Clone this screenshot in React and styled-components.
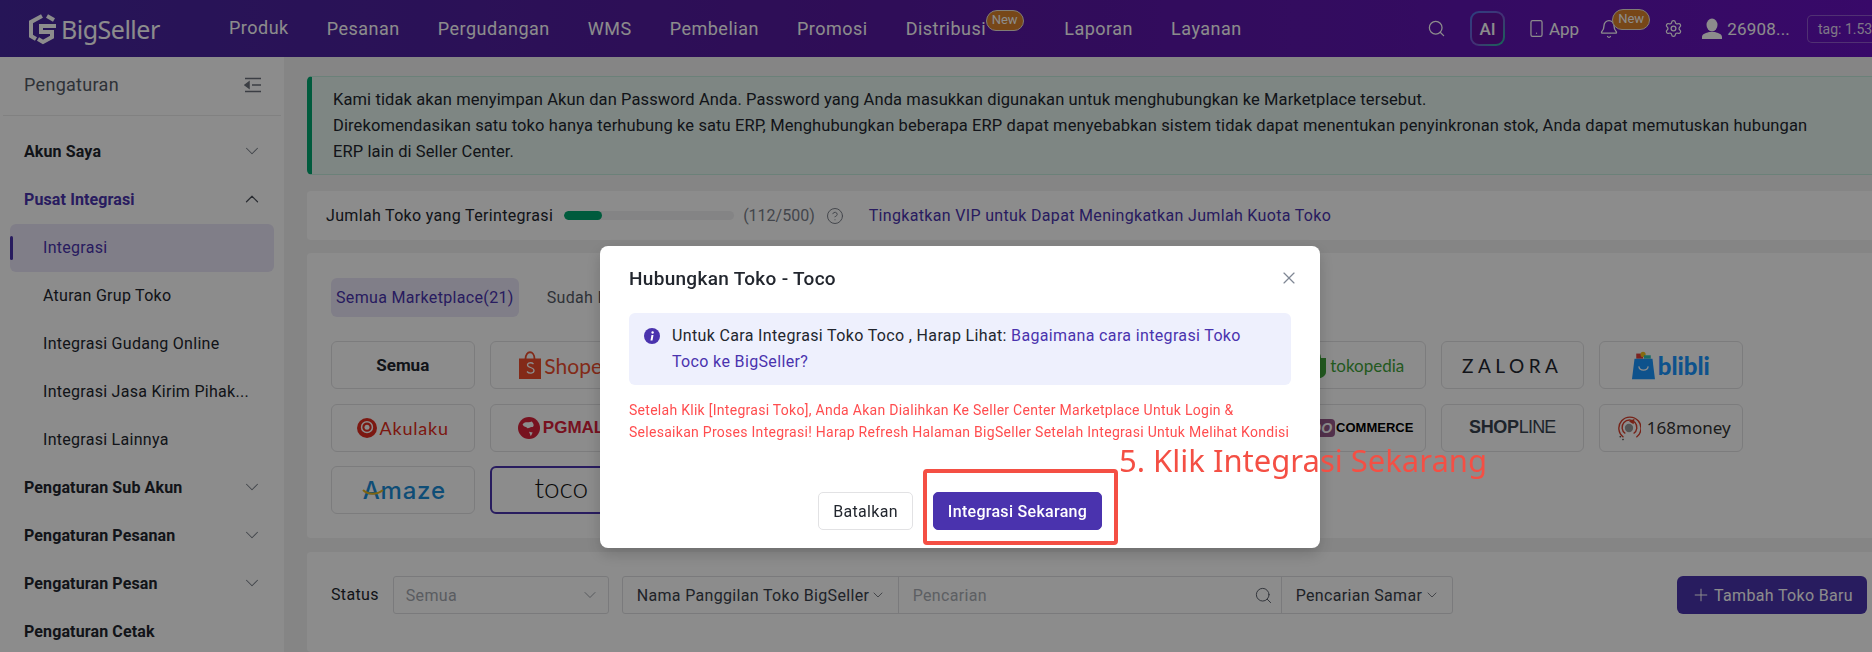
import styled, { createGlobalStyle } from 'styled-components';
import { Search, Smartphone, Bell, Settings, ChevronDown, ChevronUp, X, Plus, CircleHelp } from 'lucide-react';

const GlobalStyle = createGlobalStyle`
    html, body {
        margin: 0;
        height: 652px;
        overflow: hidden;
        background: #f3f3f3;
        font-family: Roboto, "Liberation Sans", sans-serif;
        color: #22262e;
    }
    * { box-sizing: border-box; }
`

const Page = styled.div`
    width: 1872px;
    height: 652px;
    overflow: hidden;
    display: flex;
    flex-direction: column;
`

const Header = styled.header`
    height: 57px;
    flex-shrink: 0;
    display: flex;
    align-items: center;
    padding-left: 28px;
    color: #fff;
    background: linear-gradient(90deg, #46279f 0%, #56199f 45%, #6612bf 100%);
`

const Logo = styled.div`
    display: flex;
    align-items: center;
    width: 201px;
    font-size: 25px;
    font-family: "Noto Sans", sans-serif;
    letter-spacing: -0.5px;
`

const Nav = styled.nav`
    display: flex;
    align-items: center;
    gap: 38px;
`

const NavItem = styled.a`
    position: relative;
    font-size: 18px;
    letter-spacing: 0.5px;
    white-space: nowrap;
    margin-top: ${p => (p.$raised ? '-3px' : '0')};
    margin-right: ${p => (p.$badge ? '40px' : '0')};
`

const NewBadge = styled.span`
    position: absolute;
    left: ${p => p.$left}px;
    top: ${p => p.$top}px;
    width: 38px;
    height: 21px;
    border-radius: 11px 11px 10px 10px;
    border: 1px solid #e9e2d6;
    background: #d9812c;
    color: #fff;
    font-size: 13px;
    letter-spacing: 0;
    line-height: 18px;
    text-align: center;
`

const HeaderRight = styled.div`
    margin-left: auto;
    display: flex;
    align-items: center;
    font-size: 17px;
`

const AiBox = styled.div`
    width: 35px;
    height: 35px;
    margin: 0 22px 0 24px;
    border-radius: 9px;
    padding: 2px;
    background: linear-gradient(135deg, #4f78e8, #7a5bd6 55%, #20c79a);
`

const AiInner = styled.div`
    width: 100%;
    height: 100%;
    border-radius: 7px;
    background: #62129f;
    display: flex;
    align-items: center;
    justify-content: center;
    font-size: 17px;
    font-weight: 500;
`

const AppLink = styled.div`
    display: flex;
    align-items: center;
    gap: 3px;
    margin-right: 20px;
`

const BellWrap = styled.div`
    position: relative;
    display: flex;
    margin-right: 45px;
`

const UserLink = styled.div`
    display: flex;
    align-items: center;
    gap: 5px;
    margin: 0 17px 0 19px;
    letter-spacing: 0.2px;
`

const TagBox = styled.div`
    width: 65px;
    height: 28px;
    overflow: hidden;
    white-space: nowrap;
    border: 1px solid rgba(255, 255, 255, 0.3);
    border-right: none;
    border-radius: 5px 0 0 5px;
    padding-left: 10px;
    font-size: 14px;
    line-height: 26px;
    color: rgba(255, 255, 255, 0.85);
`

const Body = styled.div`
    flex: 1;
    display: flex;
    min-height: 0;
`

const Sidebar = styled.aside`
    width: 284px;
    flex-shrink: 0;
    background: #fff;
`

const SidebarTitle = styled.div`
    height: 59px;
    margin: 0 3px 12px;
    padding: 0 19px 3px 21px;
    display: flex;
    align-items: center;
    justify-content: space-between;
    border-bottom: 1px solid #ececec;
    font-size: 18px;
    letter-spacing: 0.3px;
    color: #555b66;
`

const MenuRow = styled.div`
    position: relative;
    height: 48px;
    display: flex;
    align-items: center;
    justify-content: space-between;
    margin: 0 10px;
    padding: 0 11px 2px ${p => (p.$child ? '33px' : '14px')};
    border-radius: 6px;
    font-size: 16px;
    font-weight: ${p => (p.$child ? 400 : 700)};
    letter-spacing: ${p => (p.$child ? 0.28 : 0.12)}px;
    color: ${p => (p.$accent ? '#4a33ae' : '#22262e')};
    background: ${p => (p.$active ? '#e9e6f8' : 'transparent')};
    white-space: nowrap;

    &::before {
        content: '';
        display: ${p => (p.$active ? 'block' : 'none')};
        position: absolute;
        left: 0;
        top: 12px;
        width: 3px;
        height: 24px;
        border-radius: 2px;
        background: #4a33ae;
    }
`

const Main = styled.main`
    flex: 1;
    min-width: 0;
    padding: 19px 0 0 23px;
    display: flex;
    flex-direction: column;
    letter-spacing: 0.33px;
`

const Alert = styled.div`
    height: 99px;
    margin-bottom: 16px;
    padding: 10px 50px 0 21px;
    border: 1px solid #c3ebdc;
    border-left: 5px solid #00a76f;
    border-right: none;
    border-radius: 5px 0 0 5px;
    background: #e5f5ef;
    font-size: 16.5px;
    letter-spacing: 0.1px;
    line-height: 26px;
    color: #22262e;
`

const Panel = styled.section`
    background: #fff;
    border-radius: 4px 0 0 4px;
    margin-bottom: ${p => p.$gap || 0}px;
`

const QuotaPanel = styled(Panel)`
    height: 49px;
    display: flex;
    align-items: center;
    padding-left: 19px;
    font-size: 16px;
    white-space: nowrap;
`

const Track = styled.div`
    width: 170px;
    height: 9px;
    margin: 0 9px 0 11px;
    border-radius: 5px;
    background: #f0f0f2;
    overflow: hidden;
`

const Fill = styled.div`
    height: 100%;
    border-radius: 5px;
    background: #00a76f;
`

const Muted = styled.span`
    color: #7a808a;
    display: inline-flex;
    align-items: center;
    letter-spacing: 0;
`

const LinkText = styled.a`
    color: #4a33ae;
`

const MarketPanel = styled(Panel)`
    height: 285px;
    padding: 25px 0 0 24px;
`

const Tabs = styled.div`
    display: flex;
    align-items: center;
    gap: 23px;
    margin-bottom: 24px;
`

const Tab = styled.div`
    height: 39px;
    padding: 0 5px;
    border-radius: 6px;
    display: flex;
    align-items: center;
    font-size: 16px;
    color: ${p => (p.$active ? '#4a33ae' : '#555b66')};
    background: ${p => (p.$active ? '#e9e6f8' : 'transparent')};
`

const CardGrid = styled.div`
    display: grid;
    grid-template-columns: repeat(9, 143.5px);
    grid-auto-rows: 48px;
    column-gap: 15px;
    row-gap: 14.5px;
`

const Card = styled.div`
    display: flex;
    align-items: center;
    justify-content: center;
    border-radius: 6px;
    border: ${p => (p.$selected ? '2px solid #4a33ae' : '1px solid #e2e2e4')};
    white-space: nowrap;
`

const LogoRow = styled.span`
    display: inline-flex;
    align-items: center;
    gap: ${p => p.$gap ?? 3}px;
    margin-left: ${p => p.$shift || 0}px;
`

const Wordmark = styled.span`
    font-family: ${p => p.$font || 'Lato, sans-serif'};
    font-size: ${p => p.$size || 20}px;
    font-weight: ${p => p.$weight || 400};
    color: ${p => p.$color || '#22262e'};
    letter-spacing: ${p => p.$spacing || 0}px;
    margin-bottom: ${p => p.$lift || 0}px;
`

const WooBubble = styled.span`
    margin-right: -1px;
    padding: 1px 3px;
    border-radius: 4px;
    background: #96588a;
    color: #fff;
    font: italic 700 14px "Liberation Sans", sans-serif;
    letter-spacing: 0;
`

const AmazeMark = styled.span`
    position: relative;
    display: inline-flex;
    margin-left: 3px;
`

const Swoosh = styled.svg`
    position: absolute;
    left: -1px;
    top: 13px;
`

const FilterPanel = styled(Panel)`
    flex: 1;
    display: flex;
    align-items: flex-start;
    padding: 24px 5px 0 24px;
    font-size: 16px;
`

const FilterLabel = styled.span`
    line-height: 38px;
    margin-right: 14px;
`

const SelectBox = styled.div`
    width: 216px;
    height: 38px;
    margin-right: 13px;
    padding: 0 8px 0 12px;
    display: flex;
    align-items: center;
    justify-content: space-between;
    border: 1px solid #dedfe2;
    border-radius: 3px;
    color: #a4a8b0;
`

const InputGroup = styled.div`
    display: flex;
    height: 38px;
    border: 1px solid #dedfe2;
    border-radius: 3px;
`

const GroupCell = styled.div`
    width: ${p => p.$width}px;
    display: flex;
    align-items: center;
    justify-content: space-between;
    padding: 0 ${p => p.$right || 12}px 0 14px;
    white-space: nowrap;
    color: ${p => (p.$placeholder ? '#a9adb4' : '#3a404a')};
    border-left: ${p => (p.$first ? 'none' : '1px solid #dedfe2')};
`

const AddButton = styled.button`
    margin-left: auto;
    width: 190px;
    height: 38px;
    border: none;
    border-radius: 6px;
    background: #4a33ae;
    color: #fff;
    font: inherit;
    letter-spacing: inherit;
    display: flex;
    align-items: center;
    justify-content: center;
    gap: 3px;
`

const Overlay = styled.div`
    position: fixed;
    inset: 0;
    padding: 246px 0 0 48px;
    display: flex;
    justify-content: center;
    align-items: flex-start;
    background: rgba(0, 0, 0, 0.45);
`

const Modal = styled.div`
    position: relative;
    width: 720px;
    height: 302px;
    padding: 20px 29px 0;
    background: #fff;
    border-radius: 8px;
    box-shadow: 0 6px 16px rgba(0, 0, 0, 0.18);
`

const ModalHeader = styled.div`
    display: flex;
    align-items: center;
    justify-content: space-between;
    height: 24px;
    margin-bottom: 23px;
    font-size: 19px;
    font-weight: 500;
    letter-spacing: 0.3px;
    color: #22262e;
`

const CloseIcon = styled(X)`
    color: #7f8794;
    margin-right: -8px;
`

const InfoBox = styled.div`
    position: relative;
    height: 72px;
    padding: 10px 40px 0 43px;
    border-radius: 6px;
    background: #eef0fd;
    font-size: 16px;
    letter-spacing: 0.35px;
    line-height: 26px;
`

const InfoIcon = styled.svg`
    position: absolute;
    left: 15px;
    top: 15px;
`

const Warning = styled.p`
    margin: 14px 0 49px;
    font-size: 14px;
    letter-spacing: 0.28px;
    line-height: 22px;
    color: #ff4d4f;
    white-space: nowrap;
`

const ModalFooter = styled.div`
    display: flex;
    justify-content: flex-end;
    gap: 20px;
    padding-right: 189px;
`

const Button = styled.button`
    height: 38px;
    width: ${p => p.$width}px;
    border-radius: 5px;
    border: 1px solid ${p => (p.$primary ? '#4a33ae' : '#e2e2e4')};
    background: ${p => (p.$primary ? '#4a33ae' : '#fff')};
    color: ${p => (p.$primary ? '#fff' : '#22262e')};
    font: 16px Roboto, sans-serif;
    font-weight: ${p => (p.$primary ? 500 : 400)};
    letter-spacing: 0.3px;
    padding: 0;
`

const RedFrame = styled.div`
    position: absolute;
    left: 323px;
    top: 223px;
    width: 195px;
    height: 76px;
    border: 4px solid #f44f44;
    border-radius: 4px;
`

const RedNote = styled.div`
    position: absolute;
    left: 519px;
    top: 194px;
    font-family: "Noto Sans", sans-serif;
    font-size: 31px;
    line-height: 40px;
    color: #f44f44;
    white-space: nowrap;
`

function BigSellerMark() {
    return (
        <svg width="33" height="32" viewBox="0 0 33 32" fill="none" stroke="#fff" strokeWidth="4">
            <path d="M14 3 3 9v14l5 3" />
            <path d="M26 7 19 3" />
            <path d="M28 13H13v6h11v5l-9 5-5-3" />
        </svg>
    )
}

function SolidUser() {
    return (
        <svg width="20" height="22" viewBox="0 0 20 22" fill="#fff">
            <ellipse cx="10" cy="7" rx="5.500" ry="6.500" />
            <path d="M0 21v-2c0-3 4-4 7-5h6c3 1 7 2 7 5v2z" />
        </svg>
    )
}

function CollapseIcon() {
    return (
        <svg width="18" height="16" viewBox="0 0 18 16" fill="none" stroke="#6c727c" strokeWidth="1.500">
            <path d="M1 1.500h16M1 14.500h16M8 8h9" />
            <path d="M1 8l4-3v6z" fill="#6c727c" />
        </svg>
    )
}

function ShopeeBag() {
    return (
        <svg width="22" height="28" viewBox="0 0 22 28">
            <path d="M6.500 8c0-9 9-9 9 0" fill="none" stroke="#ee4d2d" strokeWidth="1.800" />
            <path d="M0 7.500h22v20.500H0z" fill="#ee4d2d" />
            <path d="M14.500 13c-2-2-6-1.500-6 1 0 3 6.500 2 6.500 5.500 0 3-5 3.500-7 1" fill="none" stroke="#fff" strokeWidth="1.300" />
        </svg>
    )
}

function AkulakuMark() {
    return (
        <svg width="20" height="20" viewBox="0 0 24 24">
            <circle cx="12" cy="12" r="12" fill="#e22d20" />
            <circle cx="12" cy="11" r="6.500" fill="none" stroke="#fff" strokeWidth="1.800" />
            <circle cx="12" cy="11" r="3" fill="#fff" />
        </svg>
    )
}

function PgMallMark() {
    return (
        <svg width="22" height="22" viewBox="0 0 24 24">
            <circle cx="12" cy="12" r="12" fill="#d9213a" />
            <path d="M5 8c3-4 7-1 10-3 2 2 3 5 1 6-3-1-4 2-6 1-2-2-4-1-5-4zM12 16l4 1-2 4z" fill="#fff" />
        </svg>
    )
}

function TokopediaMark() {
    return (
        <svg width="24" height="30" viewBox="0 0 24 30">
            <path d="M1 8h22v14c0 5-6 6-11 8C7 28 1 27 1 22z" fill="#3fa33a" />
            <circle cx="9" cy="15" r="5" fill="#fff" />
            <circle cx="9" cy="15" r="2.500" fill="#222" />
            <path d="M7 8c0-8 10-8 10 0" fill="none" stroke="#3fa33a" strokeWidth="2" />
        </svg>
    )
}

function BlibliBag() {
    return (
        <svg width="23" height="29" viewBox="0 0 27 32">
            <rect x="5" y="2" width="8" height="6" fill="#e0413c" />
            <circle cx="13" cy="3" r="3" fill="#f3c21b" />
            <rect x="14" y="4" width="8" height="4" fill="#2ec4b6" />
            <path d="M3 8h21l3 24H0z" fill="#1a96ff" />
            <path d="M8 17c1 6 10 6 11 0" fill="none" stroke="#fff" strokeWidth="1.500" />
        </svg>
    )
}

function MoneyMark() {
    return (
        <svg width="24" height="28" viewBox="0 0 26 30" fill="none">
            <path d="M7 25A12 12 0 1 1 21 25" stroke="#d8402c" strokeWidth="1.500" />
            <path d="M9 21A8 8 0 1 1 18 21" stroke="#d8402c" strokeWidth="1.500" />
            <circle cx="13" cy="15" r="4.500" fill="#9a9a9a" />
            <path d="M13 8l6-3-1 6z" fill="#d8402c" />
            <path d="M3 24l1 1M6 27l1 1" stroke="#444" strokeWidth="1.500" />
        </svg>
    )
}

const navItems = ['Produk', 'Pesanan', 'Pergudangan', 'WMS', 'Pembelian', 'Promosi', 'Distribusi', 'Laporan', 'Layanan']

const menu = [
    { label: 'Akun Saya', arrow: 'down' },
    { label: 'Pusat Integrasi', arrow: 'up', accent: true },
    { label: 'Integrasi', child: true, active: true, accent: true },
    { label: 'Aturan Grup Toko', child: true },
    { label: 'Integrasi Gudang Online', child: true },
    { label: 'Integrasi Jasa Kirim Pihak...', child: true },
    { label: 'Integrasi Lainnya', child: true },
    { label: 'Pengaturan Sub Akun', arrow: 'down' },
    { label: 'Pengaturan Pesanan', arrow: 'down' },
    { label: 'Pengaturan Pesan', arrow: 'down' },
    { label: 'Pengaturan Cetak' },
]

const sans = "'Liberation Sans', sans-serif"
const narrow = "'Liberation Sans Narrow', 'Liberation Sans', sans-serif"

const cards = [
    <Wordmark $font="Roboto, sans-serif" $size={17} $weight={700}>Semua</Wordmark>,
    <LogoRow $shift={10}><ShopeeBag /><Wordmark $size={21} $color="#ee4d2d">Shopee</Wordmark></LogoRow>,
    null, null, null, null,
    <LogoRow><TokopediaMark /><Wordmark $size={17} $color="#3fa33a">tokopedia</Wordmark></LogoRow>,
    <Wordmark $size={19} $spacing={4.500}>ZALORA</Wordmark>,
    <LogoRow><BlibliBag /><Wordmark $size={24} $weight={900} $color="#1a96ff">blibli</Wordmark></LogoRow>,
    <LogoRow><AkulakuMark /><Wordmark $size={18} $color="#e22d20" $spacing={0.800}>Akulaku</Wordmark></LogoRow>,
    <LogoRow $shift={10}><PgMallMark /><Wordmark $font={sans} $size={17} $weight={700} $color="#d9213a">PGMALL</Wordmark></LogoRow>,
    null, null, null, null,
    <LogoRow $gap={2}><WooBubble>WOO</WooBubble><Wordmark $font={narrow} $size={13} $weight={700} $color="#000">COMMERCE</Wordmark></LogoRow>,
    <span>
        <Wordmark $font={sans} $size={18} $weight={700} $color="#37424f" $spacing={-0.300}>SHOP</Wordmark>
        <Wordmark $font={sans} $size={18} $color="#37424f" $spacing={-0.800}>LINE</Wordmark>
    </span>,
    <LogoRow $gap={6} $shift={6}><MoneyMark /><Wordmark $font="'Noto Sans', sans-serif" $size={17} $color="#333">168money</Wordmark></LogoRow>,
    <AmazeMark>
        <Wordmark $font="Inter, sans-serif" $size={24} $weight={500} $color="#1a8cd8" $spacing={0.800}>Amaze</Wordmark>
        <Swoosh width="22" height="8" viewBox="0 0 22 8"><path d="M1 1c5 5 14 5 20 0" fill="none" stroke="#e8b820" strokeWidth="2" /></Swoosh>
    </AmazeMark>,
    <Wordmark $size={28} $weight={300} $color="#111" $lift={6}>toco</Wordmark>,
]

function App() {
    return (
        <>
            <GlobalStyle />
            <Page>
                <Header>
                    <Logo><BigSellerMark />BigSeller</Logo>
                    <Nav>
                        {navItems.map((item, i) => (
                            <NavItem key={item} $raised={i === 0} $badge={item === 'Distribusi'}>
                                {item}
                                {item === 'Distribusi' && <NewBadge $left={80} $top={-8}>New</NewBadge>}
                            </NavItem>
                        ))}
                    </Nav>
                    <HeaderRight>
                        <Search size={19} strokeWidth={1.6} />
                        <AiBox><AiInner>AI</AiInner></AiBox>
                        <AppLink><Smartphone size={19} strokeWidth={1.6} />App</AppLink>
                        <BellWrap>
                            <Bell size={20} strokeWidth={1.6} />
                            <NewBadge $left={13} $top={-10}>New</NewBadge>
                        </BellWrap>
                        <Settings size={19} strokeWidth={1.6} />
                        <UserLink><SolidUser />26908...</UserLink>
                        <TagBox>tag: 1.53.0</TagBox>
                    </HeaderRight>
                </Header>
                <Body>
                    <Sidebar>
                        <SidebarTitle>Pengaturan<CollapseIcon /></SidebarTitle>
                        {menu.map(row => (
                            <MenuRow key={row.label} $child={row.child} $active={row.active} $accent={row.accent}>
                                {row.label}
                                {row.arrow === 'down' && <ChevronDown size={22} strokeWidth={1.1} color="#7a808a" />}
                                {row.arrow === 'up' && <ChevronUp size={22} strokeWidth={1.3} color="#4a4f59" />}
                            </MenuRow>
                        ))}
                    </Sidebar>
                    <Main>
                        <Alert>
                            Kami tidak akan menyimpan Akun dan Password Anda. Password yang Anda masukkan digunakan untuk menghubungkan ke Marketplace tersebut.<br />
                            Direkomendasikan satu toko hanya terhubung ke satu ERP, Menghubungkan beberapa ERP dapat menyebabkan sistem tidak dapat menentukan penyinkronan stok, Anda dapat memutuskan hubungan ERP lain di Seller Center.
                        </Alert>
                        <QuotaPanel $gap={13}>
                            Jumlah Toko yang Terintegrasi
                            <Track><Fill style={{ width: `${(112 / 500) * 100}%` }} /></Track>
                            <Muted>(112/500)<CircleHelp size={18} strokeWidth={1.3} style={{ margin: '0 25px 0 11px' }} /></Muted>
                            <LinkText>Tingkatkan VIP untuk Dapat Meningkatkan Jumlah Kuota Toko</LinkText>
                        </QuotaPanel>
                        <MarketPanel $gap={14}>
                            <Tabs>
                                <Tab $active>Semua Marketplace(21)</Tab>
                                <Tab>Sudah Integrasi</Tab>
                            </Tabs>
                            <CardGrid>
                                {cards.map((logo, i) => (
                                    <Card key={i} $selected={i === 19}>{logo}</Card>
                                ))}
                            </CardGrid>
                        </MarketPanel>
                        <FilterPanel>
                            <FilterLabel>Status</FilterLabel>
                            <SelectBox>Semua<ChevronDown size={20} strokeWidth={1} color="#8a8f98" /></SelectBox>
                            <InputGroup>
                                <GroupCell $first $width={275}>Nama Panggilan Toko BigSeller<ChevronDown size={16} strokeWidth={1} /></GroupCell>
                                <GroupCell $placeholder $width={383} $right={8}>Pencarian<Search size={19} strokeWidth={1.2} color="#555b66" /></GroupCell>
                                <GroupCell $width={171}>Pencarian Samar<ChevronDown size={16} strokeWidth={1} /></GroupCell>
                            </InputGroup>
                            <AddButton><Plus size={20} strokeWidth={1.2} />Tambah Toko Baru</AddButton>
                        </FilterPanel>
                    </Main>
                </Body>
            </Page>
            <Overlay>
                <Modal>
                    <ModalHeader>Hubungkan Toko - Toco<CloseIcon size={20} strokeWidth={1.4} /></ModalHeader>
                    <InfoBox>
                        <InfoIcon width="16" height="16" viewBox="0 0 16 16">
                            <circle cx="8" cy="8" r="8" fill="#4a33ae" />
                            <circle cx="8.600" cy="4.500" r="1.200" fill="#fff" />
                            <path d="M7.500 7h2L8.500 12.500h-2z" fill="#fff" />
                        </InfoIcon>
                        Untuk Cara Integrasi Toko Toco , Harap Lihat: <LinkText>Bagaimana cara integrasi Toko Toco ke BigSeller?</LinkText>
                    </InfoBox>
                    <Warning>
                        Setelah Klik [Integrasi Toko], Anda Akan Dialihkan Ke Seller Center Marketplace Untuk Login &amp;<br />
                        Selesaikan Proses Integrasi! Harap Refresh Halaman BigSeller Setelah Integrasi Untuk Melihat Kondisi
                    </Warning>
                    <ModalFooter>
                        <Button $width={95}>Batalkan</Button>
                        <Button $primary $width={169}>Integrasi Sekarang</Button>
                    </ModalFooter>
                    <RedFrame />
                    <RedNote>5. Klik Integrasi Sekarang</RedNote>
                </Modal>
            </Overlay>
        </>
    )
}

export default App;
